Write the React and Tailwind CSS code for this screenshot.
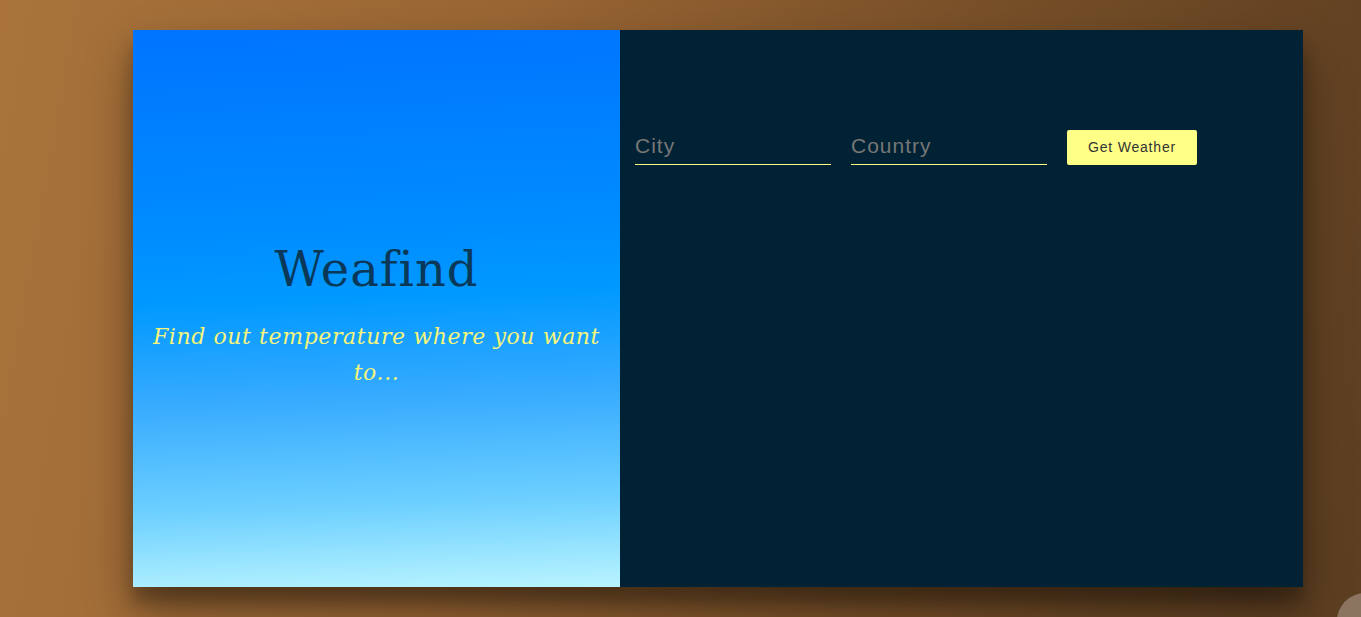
import React from "react";

export default function App() {
  return (
    <div className="relative h-[617px] w-full overflow-hidden bg-[linear-gradient(100deg,#a9733b_0%,#9a6634_35%,#7a5129_65%,#5c3e21_100%)] pl-[133px] pt-[30px]">
      <div className="flex h-[557px] w-[1170px] shadow-[0_24px_44px_rgba(0,0,0,0.38),0_15px_14px_rgba(0,0,0,0.22)]">
        <div className="flex w-[487px] flex-col items-center justify-center bg-[linear-gradient(178deg,#0074ff_0%,#008cff_35%,#0099ff_48%,#36aaff_65%,#6ccfff_84%,#b9f4ff_100%)] px-4 pt-[14px] text-center">
          <h1 className="text-[48px] leading-[56px] tracking-[1px] text-[#0a3858] [font-family:'DejaVu_Serif',serif]">
            Weafind
          </h1>
          <p className="mt-[22px] text-[22px] italic leading-[36px] tracking-[0.6px] text-[#f4f57a] [font-family:'DejaVu_Serif',serif]">
            Find out temperature where you want to...
          </p>
        </div>
        <div className="flex-1 bg-[#012234] pl-[15px] pt-[100px]">
          <form className="flex items-center gap-[20px]" onSubmit={(e) => e.preventDefault()}>
            <input
              type="text"
              placeholder="City"
              className="h-[34px] w-[196px] border-b border-[#ffff88] bg-transparent pb-[2px] text-[21px] tracking-[1px] text-white outline-none placeholder:text-[#777777] [font-family:'Liberation_Sans',Arial,sans-serif]"
            />
            <input
              type="text"
              placeholder="Country"
              className="h-[34px] w-[196px] border-b border-[#ffff88] bg-transparent pb-[2px] text-[21px] tracking-[1px] text-white outline-none placeholder:text-[#777777] [font-family:'Liberation_Sans',Arial,sans-serif]"
            />
            <button
              type="submit"
              className="h-[35px] w-[130px] rounded-[2px] bg-[#ffff88] text-[14px] tracking-[0.8px] text-[#333333] [font-family:'Liberation_Sans',Arial,sans-serif]"
            >
              Get Weather
            </button>
          </form>
        </div>
      </div>
      <div className="fixed bottom-[-32px] right-[-32px] h-[56px] w-[56px] rounded-full bg-[#8b7460]" />
    </div>
  );
}
